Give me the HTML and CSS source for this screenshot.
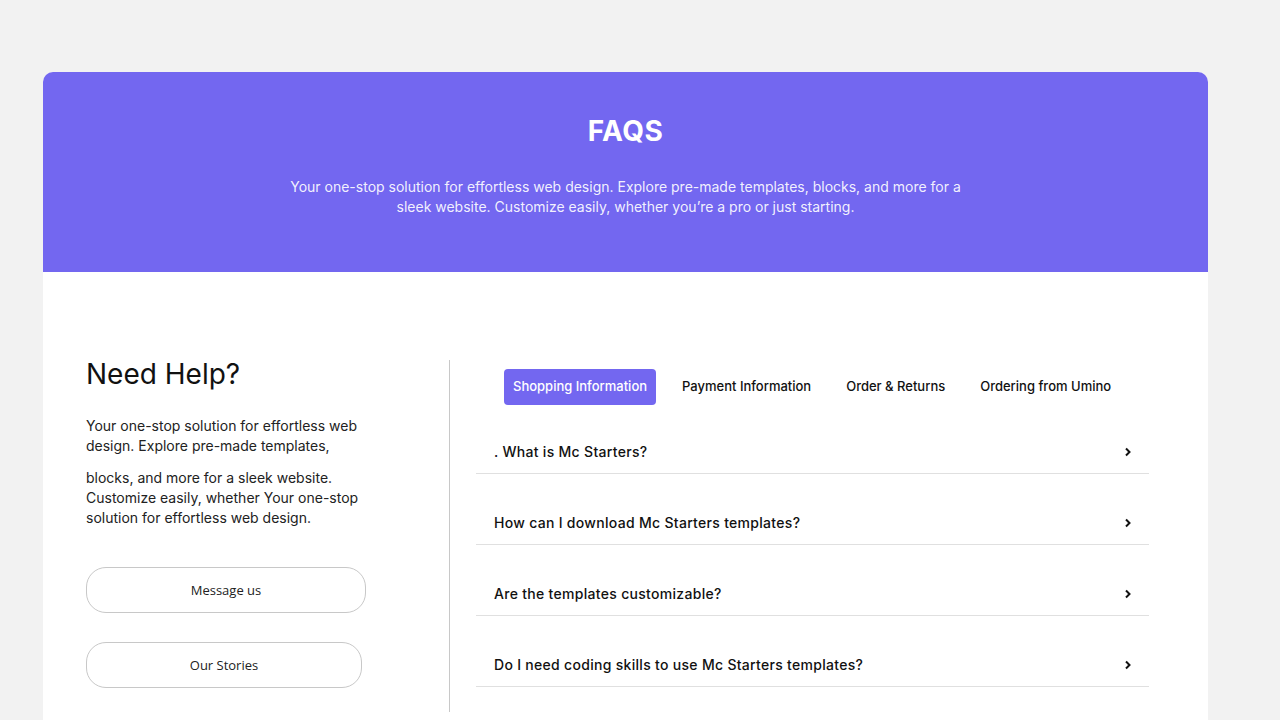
FILE: index.html
```html
<!DOCTYPE html>
<html lang="en">
<head>
    <meta charset="UTF-8">
    <title>FAQs</title>
    <link rel="stylesheet" href="styles.css">
</head>
<body>
    <div class="card">
        <header class="hero">
            <h1>FAQS</h1>
            <p>Your one-stop solution for effortless web design. Explore pre-made templates, blocks, and more for a sleek website. Customize easily, whether you’re a pro or just starting.</p>
        </header>

        <section class="content">
            <aside class="help">
                <h2>Need Help?</h2>
                <p>Your one-stop solution for effortless web design. Explore pre-made templates,</p>
                <p>blocks, and more for a sleek website. Customize easily, whether Your one-stop solution for effortless web design.</p>
                <a class="btn btn-wide" href="#">Message us</a>
                <a class="btn" href="#">Our Stories</a>
            </aside>

            <div class="faq">
                <nav class="tabs">
                    <a class="tab active" href="#">Shopping Information</a>
                    <a class="tab" href="#">Payment Information</a>
                    <a class="tab" href="#">Order &amp; Returns</a>
                    <a class="tab" href="#">Ordering from Umino</a>
                </nav>

                <!-- Fragen -->
                <div class="question">
                    <span>. What is Mc Starters?</span>
                    <svg class="chev" width="10" height="10" viewBox="0 0 10 10"><polyline points="3,1.5 6.5,5 3,8.5"/></svg>
                </div>
                <div class="question">
                    <span>How can I download Mc Starters templates?</span>
                    <svg class="chev" width="10" height="10" viewBox="0 0 10 10"><polyline points="3,1.5 6.5,5 3,8.5"/></svg>
                </div>
                <div class="question">
                    <span>Are the templates customizable?</span>
                    <svg class="chev" width="10" height="10" viewBox="0 0 10 10"><polyline points="3,1.5 6.5,5 3,8.5"/></svg>
                </div>
                <div class="question">
                    <span>Do I need coding skills to use Mc Starters templates?</span>
                    <svg class="chev" width="10" height="10" viewBox="0 0 10 10"><polyline points="3,1.5 6.5,5 3,8.5"/></svg>
                </div>
            </div>
        </section>
    </div>
</body>
</html>
```

FILE: styles.css
```css
body {
    margin: 0;
    padding: 72px 72px 0 43px;
    background: #f2f2f2;
    font-family: Inter, 'Noto Sans', sans-serif;
    color: #111;
}
.card {
    background: white;
    border-radius: 10px 10px 0 0;
    overflow: hidden;
}
.hero {
    background: #7367f0;
    height: 200px;
    box-sizing: border-box;
    padding-top: 42px;
    text-align: center;
    color: white;
}
.hero h1 {
    margin: 0;
    font-size: 28px;
    line-height: 34px;
    font-weight: 700;
    letter-spacing: 0.5px;
}
.hero p {
    margin: 29px auto 0;
    max-width: 680px;
    font-size: 14px;
    line-height: 20px;
    color: rgba(255,255,255,0.92);
}
.content {
    display: flex;
    padding: 88px 59px 8px 43px;
}
.help {
    width: 363px;
    flex-shrink: 0;
    border-right: 1px solid #c8c8c8;
    padding-bottom: 24px;
}
.help h2 {
    margin: 0 0 28px;
    font-size: 28px;
    line-height: 28px;
    font-weight: 400;
}
.help p {
    margin: 0 0 12px;
    width: 275px;
    font-size: 14px;
    line-height: 20px;
    color: #222;
}
.btn {
    display: block;
    width: 276px;
    height: 46px;
    line-height: 44px;
    box-sizing: border-box;
    margin-top: 29px;
    border: 1px solid #c8c8c8;
    border-radius: 20px;
    text-align: center;
    text-decoration: none;
    color: #222;
    font-family: 'Open Sans', sans-serif;
    font-size: 13px;
}
.btn-wide {
    width: 280px;
    margin-top: 39px;
}
.faq {
    flex: 1;
    padding-left: 26px;
}
.tabs {
    display: flex;
    gap: 17px;
    margin: 9px 0 0 28px;
}
.tab {
    padding: 0 9px;
    height: 36px;
    line-height: 35px;
    border-radius: 4px;
    font-size: 13px;
    font-weight: 500;
    color: #111;
    text-decoration: none;
}
.tab.active {
    background: #7367f0;
    color: white;
}
.question {
    display: flex;
    justify-content: space-between;
    align-items: center;
    padding: 13px 16px 11px 18px;
    margin-top: 26px;
    border-bottom: 1px solid #e0e0e0;
    font-size: 14px;
    line-height: 20px;
    font-weight: 500;
    letter-spacing: 0.3px;
}
.question:first-of-type {
    margin-top: 24px;
}
.chev {
    fill: none;
    stroke: #111;
    stroke-width: 2;
}
```
